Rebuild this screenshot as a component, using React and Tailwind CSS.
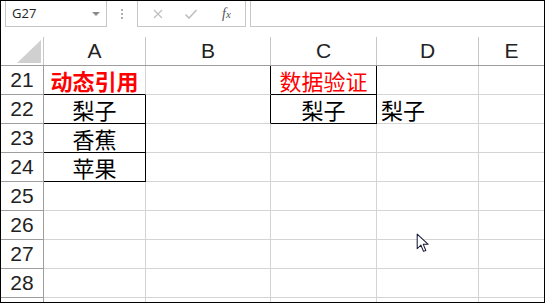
import React from "react";

const cols = [
    { key: "A", w: "w-[102px]" },
    { key: "B", w: "w-[125px]" },
    { key: "C", w: "w-[106px]" },
    { key: "D", w: "w-[102px]" },
    { key: "E", w: "flex-1" },
];

// per cell: text, style, right/bottom border black
const rows = [
    {
        n: 21,
        cells: {
            A: { t: "动态引用", cls: "text-[#ff0000] font-bold justify-center", b: true },
            B: { r: true },
            C: { t: "数据验证", cls: "text-[#ff0000] justify-center", r: true, b: true },
        },
    },
    {
        n: 22,
        cells: {
            A: { t: "梨子", cls: "text-black justify-center", r: true, b: true },
            B: { r: true },
            C: { t: "梨子", cls: "text-black justify-center", r: true, b: true },
            D: { t: "梨子", cls: "text-black justify-start pl-[4px]" },
        },
    },
    { n: 23, cells: { A: { t: "香蕉", cls: "text-black justify-center", r: true, b: true } } },
    { n: 24, cells: { A: { t: "苹果", cls: "text-black justify-center", r: true, b: true } } },
    { n: 25, cells: {} },
    { n: 26, cells: {} },
    { n: 27, cells: {} },
    { n: 28, cells: {} },
    { n: "", cells: {} },
];

const num = { fontFamily: '"Liberation Sans", Arial, sans-serif' };
const cjk = { fontFamily: '"Noto Sans CJK SC", "Liberation Sans", sans-serif' };

const Cursor = () => (
    <svg width="15" height="21" viewBox="0 0 14 20" className="absolute left-[415px] top-[232px]">
        <path d="M1 1 L1 15 L4.5 11.5 L7 17.5 L9.2 16.6 L6.8 10.8 L11.5 10.8 Z" fill="#fff" stroke="#1a1a3a" strokeWidth="1" strokeLinejoin="round" />
    </svg>
);

const App = () => {
    return (
        <div className="relative w-[545px] h-[303px] border border-black bg-white overflow-hidden">
            {/* formula bar */}
            <div className="flex h-[26px] items-stretch">
                <div className="ml-[4px] w-[102px] border border-t-0 border-[#c6c6c6] flex items-center justify-between pl-[6px] pr-[6px]">
                    <span className="text-[13px] text-[#222]" style={{ fontFamily: '"Open Sans", "Liberation Sans", sans-serif' }}>G27</span>
                    <span className="w-0 h-0 border-l-[4px] border-r-[4px] border-t-[4px] border-l-transparent border-r-transparent border-t-[#8a8a8a]" />
                </div>
                <div className="w-[30px] flex flex-col items-center justify-center gap-[2px]">
                    <span className="w-[2px] h-[2px] bg-[#b0b0b0]" />
                    <span className="w-[2px] h-[2px] bg-[#b0b0b0]" />
                    <span className="w-[2px] h-[2px] bg-[#b0b0b0]" />
                </div>
                <div className="w-[109px] border border-t-0 border-[#c6c6c6] flex items-center">
                    <svg width="12" height="12" viewBox="0 0 12 12" className="ml-[14px]">
                        <path d="M2 2 L10 10 M10 2 L2 10" stroke="#c0c0c0" strokeWidth="1.3" />
                    </svg>
                    <svg width="14" height="12" viewBox="0 0 14 12" className="ml-[20px]">
                        <path d="M1.5 6.5 L5 10 L12.5 2" stroke="#c0c0c0" strokeWidth="1.6" fill="none" />
                    </svg>
                    <span className="ml-[24px] text-[14px] italic text-[#555]" style={{ fontFamily: '"Liberation Serif", serif' }}>
                        f<span className="text-[11px]">x</span>
                    </span>
                </div>
                <div className="ml-[4px] flex-1 border-b border-l border-[#c6c6c6]" />
            </div>
            <div className="h-[10px]" />
            {/* column headers */}
            <div className="flex h-[29px] border-b border-[#9e9e9e]">
                <div className="w-[43px] border-r border-[#c6c6c6] relative">
                    <svg width="25" height="23" viewBox="0 0 25 23" className="absolute right-[1px] bottom-[2px]">
                        <path d="M24 0 L24 23 L0 23 Z" fill="#d0d0d0" />
                    </svg>
                </div>
                {cols.map((c) => (
                    <div
                        key={c.key}
                        className={`${c.w} ${c.key === "E" ? "" : "border-r border-[#c6c6c6]"} flex items-center justify-center text-[21px] text-[#222]`}
                        style={num}
                    >
                        {c.key}
                    </div>
                ))}
            </div>
            {/* rows */}
            {rows.map((row, i) => (
                <div key={i} className="flex h-[29px]">
                    <div
                        className="w-[43px] border-r border-b border-[#9e9e9e] flex items-center justify-center text-[21px] text-[#222]"
                        style={num}
                    >
                        {row.n}
                    </div>
                    {cols.map((c) => {
                        const cell = row.cells[c.key] || {};
                        const rCls = c.key === "E" ? "" : cell.r ? "border-r border-r-black" : "border-r border-r-[#d4d4d4]";
                        const bCls = cell.b ? "border-b border-b-black" : "border-b border-b-[#d4d4d4]";
                        return (
                            <div
                                key={c.key}
                                className={`${c.w} ${rCls} ${bCls} flex items-center text-[22px] leading-none ${cell.cls || ""}`}
                                style={cjk}
                            >
                                {cell.t}
                            </div>
                        );
                    })}
                </div>
            ))}
            <Cursor />
        </div>
    );
};

export default App;
